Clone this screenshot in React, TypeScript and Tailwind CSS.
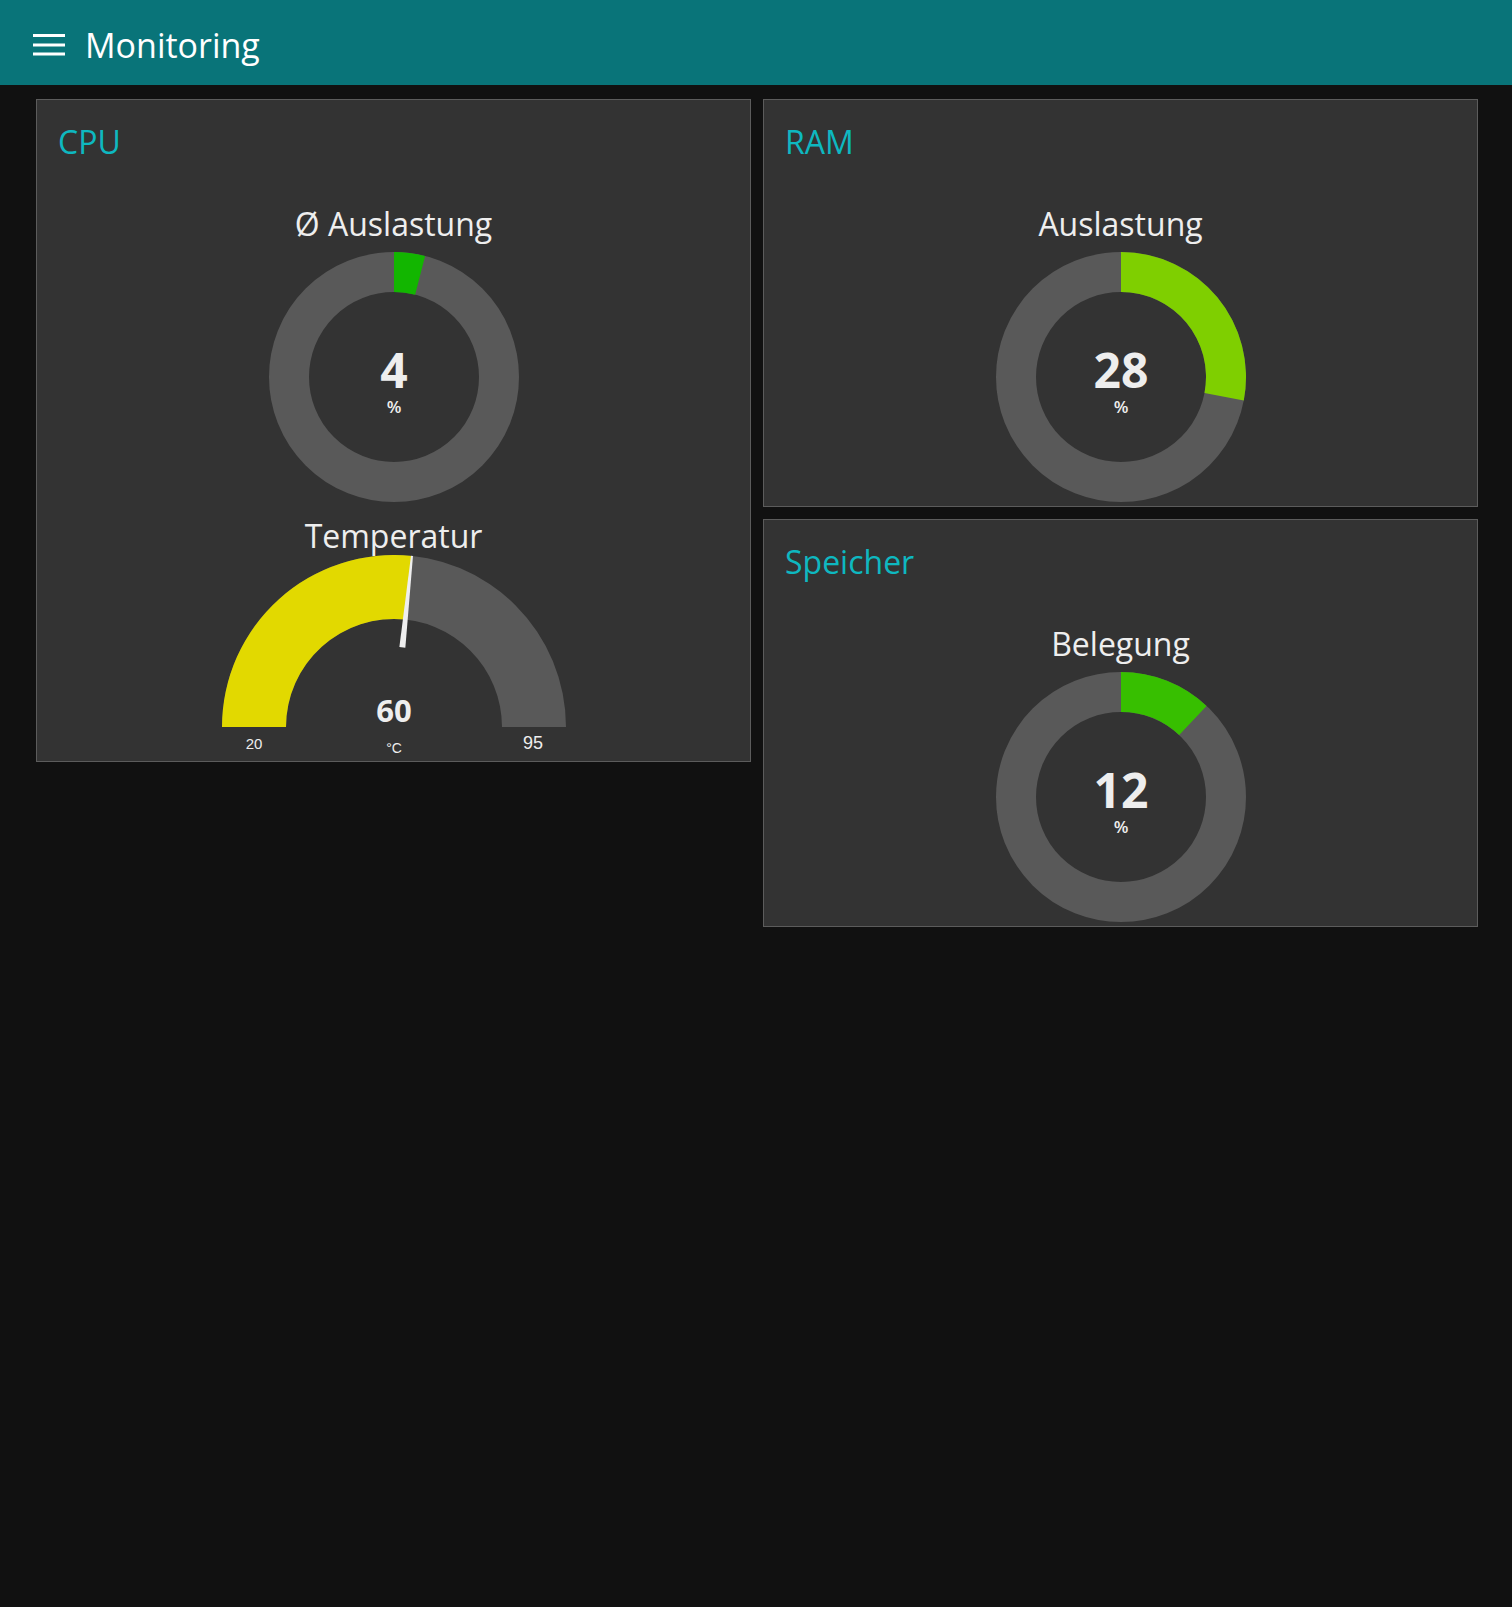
const GAUGE_GRAY = '#595959';

// point on a circle, angle in degrees measured clockwise from 12 o'clock
const polar = (cx: number, cy: number, r: number, deg: number) => {
  const a = (deg * Math.PI) / 180;
  return [cx + r * Math.sin(a), cy - r * Math.cos(a)];
};

const ringPath = (cx: number, cy: number, ro: number, ri: number, from: number, to: number) => {
  const [x1, y1] = polar(cx, cy, ro, from);
  const [x2, y2] = polar(cx, cy, ro, to);
  const [x3, y3] = polar(cx, cy, ri, to);
  const [x4, y4] = polar(cx, cy, ri, from);
  const large = to - from > 180 ? 1 : 0;
  return `M${x1} ${y1} A${ro} ${ro} 0 ${large} 1 ${x2} ${y2} L${x3} ${y3} A${ri} ${ri} 0 ${large} 0 ${x4} ${y4} Z`;
};

type DonutProps = { label: string; value: number; color: string };

const Donut = ({ label, value, color }: DonutProps) => {
  const end = (value / 100) * 360;
  return (
    <div className="flex flex-col items-center">
      <div className="mt-[42px] text-[32px] leading-[40px] text-[#eeeeee]">{label}</div>
      <svg width="250" height="250" viewBox="0 0 250 250" className="mt-[8px]">
        <circle cx="125" cy="125" r="105" fill="none" stroke={GAUGE_GRAY} strokeWidth="40" />
        <path d={ringPath(125, 125, 125, 85, 0, end)} fill={color} />
        <text
          x="125"
          y="136"
          textAnchor="middle"
          fill="#eeeeee"
          fontSize="48"
          fontWeight="700"
          fontFamily="'Open Sans', sans-serif"
        >
          {value}
        </text>
        <text
          x="125"
          y="161"
          textAnchor="middle"
          fill="#eeeeee"
          fontSize="17"
          fontWeight="600"
          fontFamily="'Open Sans', sans-serif"
        >
          %
        </text>
      </svg>
    </div>
  );
};

const TempGauge = ({ value, min, max }: { value: number; min: number; max: number }) => {
  const cx = 200;
  const cy = 172;
  // angle from 12 o'clock: -90 at min, +90 at max
  const ang = -90 + ((value - min) / (max - min)) * 180;
  const d = (ang * Math.PI) / 180;
  const dir = [Math.sin(d), -Math.cos(d)];
  const nrm = [Math.cos(d), Math.sin(d)];
  const b = [cx + 80 * dir[0], cy + 80 * dir[1]];
  const t = [cx + 172 * dir[0], cy + 172 * dir[1]];
  const needle = [
    [b[0] + 3 * nrm[0], b[1] + 3 * nrm[1]],
    [t[0] + 1 * nrm[0], t[1] + 1 * nrm[1]],
    [t[0] - 1 * nrm[0], t[1] - 1 * nrm[1]],
    [b[0] - 3 * nrm[0], b[1] - 3 * nrm[1]],
  ]
    .map((p) => p.join(','))
    .join(' ');

  return (
    <div className="flex flex-col items-center">
      <div className="mt-[14px] text-[32px] leading-[40px] text-[#eeeeee]">Temperatur</div>
      <svg width="400" height="202" viewBox="0 0 400 202" className="-mt-[1px]">
        <path d={ringPath(cx, cy, 172, 108, -90, 90)} fill={GAUGE_GRAY} />
        <path d={ringPath(cx, cy, 172, 108, -90, ang)} fill="#e2d900" />
        <polygon points={needle} fill="#eeeeee" />
        <text
          x="200"
          y="167"
          textAnchor="middle"
          fill="#eeeeee"
          fontSize="31"
          fontWeight="700"
          fontFamily="'Open Sans', sans-serif"
        >
          {value}
        </text>
        <text x="60" y="194" textAnchor="middle" fill="#eeeeee" fontSize="15" fontFamily="'Liberation Sans', Arial, sans-serif">
          {min}
        </text>
        <text x="339" y="194" textAnchor="middle" fill="#eeeeee" fontSize="18" fontFamily="'Liberation Sans', Arial, sans-serif">
          {max}
        </text>
        <text x="200" y="198" textAnchor="middle" fill="#eeeeee" fontSize="14" fontFamily="'Liberation Sans', Arial, sans-serif">
          °C
        </text>
      </svg>
    </div>
  );
};

const Card = ({ title, children }: { title: string; children: React.ReactNode }) => (
  <div className="border border-[#5c5c5c] bg-[#333333] pb-[4px]">
    <div className="pl-[21px] pt-[22px] text-[32px] leading-[40px] text-[#0eb8c0]">{title}</div>
    {children}
  </div>
);

export default function App() {
  return (
    <div className="min-h-[1607px] bg-[#111111] font-['Open_Sans',sans-serif]">
      <header className="flex h-[85px] items-center bg-[#097479] pl-[33px] pt-[4px]">
        <svg width="32" height="22" viewBox="0 0 32 22">
          <rect x="0" y="0" width="32" height="3" fill="#ffffff" />
          <rect x="0" y="9.5" width="32" height="3" fill="#ffffff" />
          <rect x="0" y="18.5" width="32" height="3" fill="#ffffff" />
        </svg>
        <h1 className="ml-[20px] text-[34px] leading-[40px] text-white">Monitoring</h1>
      </header>

      <main className="grid grid-cols-2 items-start gap-[12px] pl-[36px] pr-[34px] pt-[14px]">
        <Card title="CPU">
          <Donut label="Ø Auslastung" value={4} color="#12b600" />
          <TempGauge value={60} min={20} max={95} />
        </Card>

        <div className="flex flex-col gap-[12px]">
          <Card title="RAM">
            <Donut label="Auslastung" value={28} color="#7fcf00" />
          </Card>
          <Card title="Speicher">
            <Donut label="Belegung" value={12} color="#37bf00" />
          </Card>
        </div>
      </main>
    </div>
  );
}
